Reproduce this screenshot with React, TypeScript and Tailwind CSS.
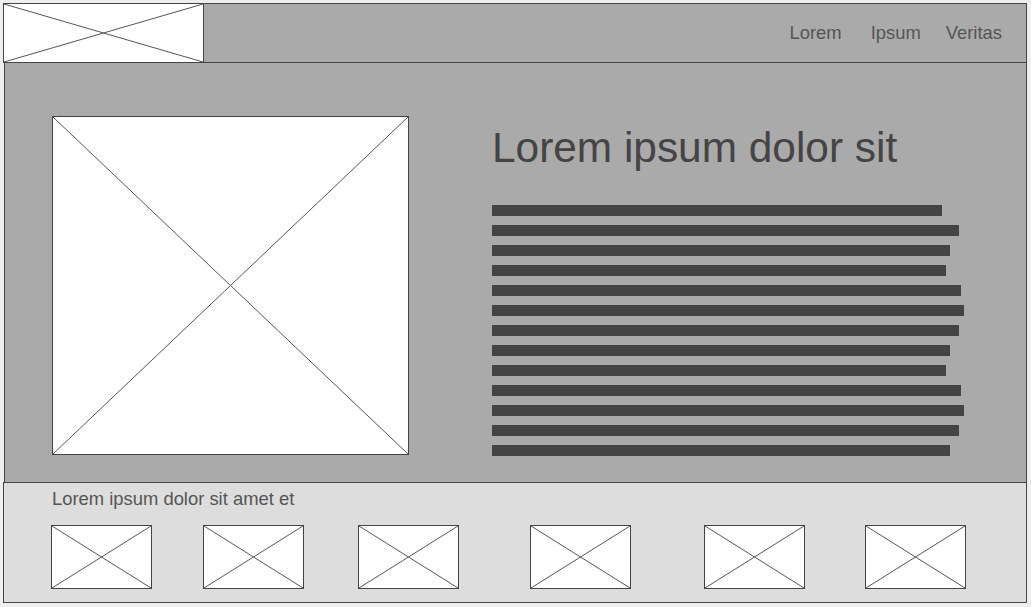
const barWidths = [450, 467, 458, 454, 469, 472, 467, 458, 454, 469, 472, 467, 458];
const thumbGaps = [0, 51, 54, 71, 73, 60];

function Placeholder({ className }: { className: string }) {
  return (
    <div className={`relative border border-[#444] bg-white ${className}`}>
      <svg className="absolute inset-0 h-full w-full" preserveAspectRatio="none" viewBox="0 0 100 100">
        <line x1="0" y1="0" x2="100" y2="100" stroke="#555" strokeWidth="1" vectorEffect="non-scaling-stroke" />
        <line x1="100" y1="0" x2="0" y2="100" stroke="#555" strokeWidth="1" vectorEffect="non-scaling-stroke" />
      </svg>
    </div>
  );
}

export default function App() {
  return (
    <div
      className="h-[607px] w-[1031px] bg-[#eeeeee] pl-[3px] pt-[3px]"
      style={{ fontFamily: '"Liberation Sans", Arial, sans-serif' }}
    >
      <div className="w-[1024px]">
        <header className="flex h-[60px]">
          <Placeholder className="h-full w-[201px]" />
          <nav className="flex flex-1 items-center justify-end border-y border-r border-[#444] bg-[#aaaaaa] pr-[24px] text-[18.4px] leading-[20px] text-[#555]">
            <a>Lorem</a>
            <a className="ml-[29px]">Ipsum</a>
            <a className="ml-[25px]">Veritas</a>
          </nav>
        </header>

        <section className="ml-px flex h-[419px] border-x border-[#444] bg-[#aaaaaa]">
          <Placeholder className="ml-[47px] mt-[53px] h-[339px] w-[357px] shrink-0" />
          <div className="ml-[83px] pt-[61px]">
            <h1 className="text-[42.4px] leading-[48px] text-[#444]">Lorem ipsum dolor sit</h1>
            <div className="mt-[33px] flex flex-col gap-[9px]">
              {barWidths.map((w, i) => (
                <div key={i} className="h-[11px] bg-[#444]" style={{ width: w }} />
              ))}
            </div>
          </div>
        </section>

        <section className="h-[121px] border border-[#444] bg-[#dddddd] pl-[47px] pt-[6px]">
          <p className="pl-px text-[18.4px] leading-[20px] text-[#555]">Lorem ipsum dolor sit amet et</p>
          <div className="mt-[16px] flex">
            {thumbGaps.map((g, i) => (
              <div key={i} style={{ marginLeft: g }}>
                <Placeholder className="h-[64px] w-[101px]" />
              </div>
            ))}
          </div>
        </section>
      </div>
    </div>
  );
}
